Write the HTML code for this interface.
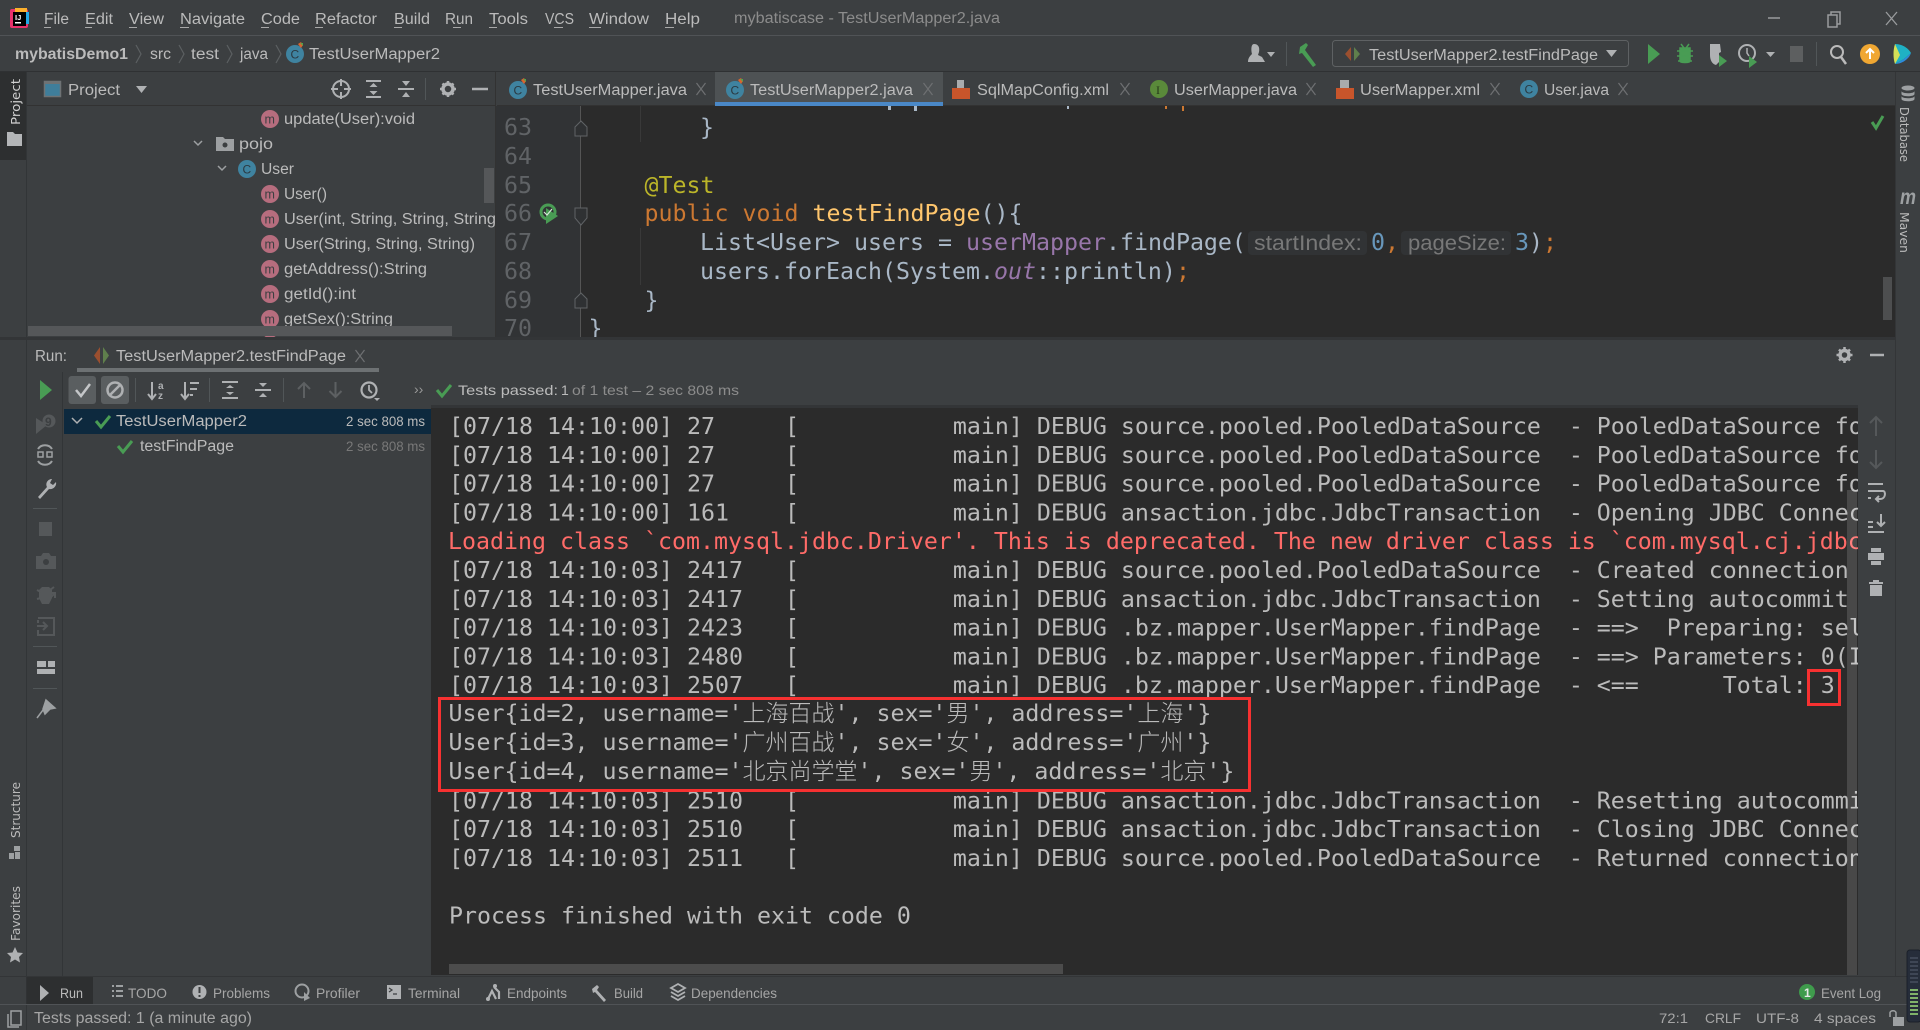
<!DOCTYPE html>
<html><head><meta charset="utf-8"><title>mybatiscase - TestUserMapper2.java</title>
<style>
html,body{margin:0;padding:0;background:#3c3f41;overflow:hidden;width:1920px;height:1030px}
svg{display:block}
text{white-space:pre}
.u{font-family:"Liberation Sans","Noto Sans CJK SC",sans-serif;font-size:15.5px;fill:#bbbbbb}
.s{font-size:14px}
.g{fill:#8c8c8c}
.m{font-family:"DejaVu Sans Mono","Noto Sans CJK SC",monospace;font-size:23.25px;fill:#bbbbbb}
.cj{font-size:23px;font-family:"Noto Sans CJK SC",sans-serif;font-weight:300}
.c{fill:#a9b7c6}
.r{fill:#ff6b68}
.k{fill:#cc7832}
.ln{fill:#606366}
.v{font-family:"DejaVu Sans",sans-serif;font-size:12.5px;fill:#bbbbbb}
.ic{fill:none;stroke:#afb1b3;stroke-width:2}
.x{stroke:#6e7072;stroke-width:1.2;fill:none}
.sep{stroke:#515658;stroke-width:1}
</style></head><body>
<svg xmlns="http://www.w3.org/2000/svg" width="1920" height="1030" viewBox="0 0 1920 1030">
<defs>
<clipPath id="con"><rect x="431" y="408" width="1427" height="567"/></clipPath>
<clipPath id="tree"><rect x="27" y="106" width="468" height="231"/></clipPath>
<clipPath id="ed"><rect x="497" y="106" width="1398" height="231"/></clipPath>
<g id="ci"><circle r="9" fill="#3f83a0"/><text y="4.5" x="-4.5" font-family="Liberation Sans" font-size="12" fill="#2b3a42">C</text></g>
<g id="cp"><use href="#ci"/><path d="M3 -10l3 -2 2 3 -2 3z" fill="#d9652f"/><path d="M5 -11l3 0 0 3z" fill="#58a14b"/></g>
<g id="mi"><circle r="9" fill="#b66d7e"/><text y="4.5" x="-5.5" font-family="Liberation Sans" font-size="12.5" fill="#3c3f41">m</text></g>
<path id="xx" class="x" d="M-4.5 -6L4.5 6M4.5 -6L-4.5 6"/>
<path id="xml" fill="#c8552b" d="M-9 0h18v11h-18z"/>
</defs>

<rect width="1920" height="1030" fill="#3c3f41"/>

<!-- title bar -->
<rect x="0" y="35" width="1920" height="1" fill="#505356"/>
<rect x="10" y="9" width="18" height="19" rx="2" fill="#e8336b"/>
<rect x="15" y="8" width="12" height="6" fill="#fcb02c"/>
<rect x="23" y="12" width="6" height="12" fill="#22a8e6"/>
<rect x="13" y="12" width="13" height="14" fill="#000"/>
<text x="15" y="20" font-family="Liberation Sans" font-size="7.5" font-weight="bold" fill="#fff">IJ</text>
<rect x="15" y="22" width="6" height="1.5" fill="#fff"/>
<g class="u">
<text x="44" y="24" textLength="25" lengthAdjust="spacingAndGlyphs" class="u">File</text>
<text x="85" y="24" textLength="28" lengthAdjust="spacingAndGlyphs" class="u">Edit</text>
<text x="129" y="24" textLength="35" lengthAdjust="spacingAndGlyphs" class="u">View</text>
<text x="180" y="24" textLength="65" lengthAdjust="spacingAndGlyphs" class="u">Navigate</text>
<text x="261" y="24" textLength="39" lengthAdjust="spacingAndGlyphs" class="u">Code</text>
<text x="315" y="24" textLength="62" lengthAdjust="spacingAndGlyphs" class="u">Refactor</text>
<text x="394" y="24" textLength="36" lengthAdjust="spacingAndGlyphs" class="u">Build</text>
<text x="445" y="24" textLength="28" lengthAdjust="spacingAndGlyphs" class="u">Run</text>
<text x="489" y="24" textLength="39" lengthAdjust="spacingAndGlyphs" class="u">Tools</text>
<text x="545" y="24" textLength="29" lengthAdjust="spacingAndGlyphs" class="u">VCS</text>
<text x="589" y="24" textLength="60" lengthAdjust="spacingAndGlyphs" class="u">Window</text>
<text x="665" y="24" textLength="35" lengthAdjust="spacingAndGlyphs" class="u">Help</text>
<text x="734" y="23" textLength="266" lengthAdjust="spacingAndGlyphs" class="u g">mybatiscase - TestUserMapper2.java</text>
</g>
<g fill="#bbbbbb" opacity=".85">
<rect x="44" y="27" width="7" height="1"/><rect x="85" y="27" width="7" height="1"/><rect x="129" y="27" width="8" height="1"/><rect x="180" y="27" width="9" height="1"/><rect x="261" y="27" width="8" height="1"/><rect x="315" y="27" width="8" height="1"/><rect x="394" y="27" width="8" height="1"/><rect x="453" y="27" width="8" height="1"/><rect x="489" y="27" width="8" height="1"/><rect x="554" y="27" width="9" height="1"/><rect x="589" y="27" width="12" height="1"/><rect x="665" y="27" width="9" height="1"/>
</g>
<path d="M1768 18h12" stroke="#9a9c9e" stroke-width="1.5"/>
<path d="M1828 15h9v12h-9zM1831 15v-3h9v12h-3" fill="none" stroke="#9a9c9e" stroke-width="1.5"/>
<path d="M1886 12l11 13M1897 12l-11 13" stroke="#9a9c9e" stroke-width="1.3"/>

<!-- nav bar -->
<rect x="0" y="71" width="1920" height="1" fill="#2f3133"/>
<text x="15" y="59" textLength="113" lengthAdjust="spacingAndGlyphs" class="u" font-weight="bold" style="font-weight:bold">mybatisDemo1</text>
<text x="150" y="59" textLength="21" lengthAdjust="spacingAndGlyphs" class="u">src</text>
<text x="191" y="59" textLength="28" lengthAdjust="spacingAndGlyphs" class="u">test</text>
<text x="240" y="59" textLength="28" lengthAdjust="spacingAndGlyphs" class="u">java</text>
<text x="309" y="59" textLength="131" lengthAdjust="spacingAndGlyphs" class="u">TestUserMapper2</text>
<path d="M136 45l5 9 -5 9M179 45l5 9 -5 9M227 45l5 9 -5 9M276 45l5 9 -5 9" fill="none" stroke="#5c6062" stroke-width="1.2"/>
<use href="#cp" x="295" y="54"/>
<!-- toolbar -->
<path d="M1254 44c4 0 6 3 5 8l-1 3 4 2 3 5h-17c0 -4 2 -6 4 -8 -1 -4 -1 -10 2 -10z" fill="#afb1b3"/>
<path d="M1267 52h8l-4 5z" fill="#afb1b3"/>
<line class="sep" x1="1286.5" y1="42" x2="1286.5" y2="66"/>
<path d="M1300 47l6 -4 2 2 -3 5 11 15 -3 2 -11 -14 -3 1z" fill="#499c54"/>
<rect x="1332.5" y="40.5" width="296" height="26" rx="3" fill="#3c3f41" stroke="#5e6163"/>
<path d="M1351 47v14l-6 -7z" fill="#9b4f2f"/><path d="M1354 47v14l6 -7z" fill="#5f7f4c"/>
<text x="1369" y="60" textLength="229" lengthAdjust="spacingAndGlyphs" class="u">TestUserMapper2.testFindPage</text>
<path d="M1606 50h11l-5.500 7z" fill="#afb1b3"/>
<path d="M1648 44l12 10 -12 10z" fill="#499c54"/>
<path d="M1680 48h10v13c0 2 -10 2 -10 0zM1681 44l3 4M1689 44l-3 4M1677 51h16M1677 56h16M1678 61h14" fill="#499c54" stroke="#499c54" stroke-width="1.500"/>
<path d="M1710 44h10l1 8 -2 1v9l-3 3c-4 -1 -6 -5 -6 -10z" fill="#afb1b3"/><path d="M1719 55l8 6 -8 6z" fill="#499c54"/>
<circle cx="1747" cy="53" r="8" fill="none" stroke="#afb1b3" stroke-width="2"/><path d="M1747 48v5l2 3" stroke="#afb1b3" stroke-width="1.500" fill="none"/><path d="M1749 56l8 6 -8 6z" fill="#499c54"/>
<path d="M1766 52h9l-4.500 5z" fill="#afb1b3"/>
<rect x="1790" y="46" width="13" height="16" fill="#5d5f60"/>
<line class="sep" x1="1816.5" y1="42" x2="1816.5" y2="66"/>
<circle cx="1837" cy="52" r="6" fill="none" stroke="#bbbbbb" stroke-width="2"/><path d="M1841 57l5 7" stroke="#bbbbbb" stroke-width="2.500"/>
<ellipse cx="1870" cy="54" rx="10" ry="10" fill="#f0a732"/><path d="M1870 59v-9M1866 53l4 -4 4 4" stroke="#fff" stroke-width="2" fill="none"/>
<path d="M1895 44c8 0 14 5 16 9l-7 6 -9 5z" fill="#1fb1c4"/><path d="M1895 44c-2 6 -2 14 0 20l5 -9z" fill="#d4e157"/><path d="M1911 53l-7 6 -9 5c7 0 14 -5 16 -11z" fill="#2d8cdb"/>

<!-- left strip -->
<rect x="0" y="72" width="26" height="88" fill="#2d2f30"/>
<rect x="26" y="72" width="1" height="958" fill="#323537"/>
<text class="v" transform="translate(20,125) rotate(-90)" textLength="46" lengthAdjust="spacingAndGlyphs" style="fill:#d0d0d0">Project</text>
<path d="M7 132h6l2 2h7v12h-15z" fill="#b4b6b8"/>
<text class="v" transform="translate(20,838) rotate(-90)" textLength="56" lengthAdjust="spacingAndGlyphs">Structure</text>
<path d="M9 853h5v6h-5zM14 846h6v5h-6zM15 852h5v7h-5z" fill="#9da0a2"/>
<text class="v" transform="translate(20,941) rotate(-90)" textLength="55" lengthAdjust="spacingAndGlyphs">Favorites</text>
<path d="M15 947l2.500 5.500 5.500 .5 -4 4 1 5.500 -5 -3 -5 3 1 -5.500 -4 -4 5.500 -.5z" fill="#afb1b3"/>

<!-- project header -->
<rect x="27" y="105" width="468" height="1" fill="#323232"/>
<rect x="44.500" y="81.500" width="16" height="15" fill="#3f7e9b" stroke="#6e7274" stroke-width="1.500"/>
<rect x="44" y="81" width="17" height="3" fill="#6e7274"/>
<text x="68" y="95" textLength="52" lengthAdjust="spacingAndGlyphs" class="u">Project</text>
<path d="M136 86h11l-5.500 7z" fill="#afb1b3"/>
<circle cx="341" cy="89" r="8" fill="none" stroke="#afb1b3" stroke-width="2"/><path d="M341 79v7M341 92v7M331 89h7M344 89h7" stroke="#afb1b3" stroke-width="2"/>
<path d="M366 81h15M366 97h15" stroke="#afb1b3" stroke-width="2"/><path d="M369.500 87l4 -4 4 4zM369.500 91l4 4 4 -4z" fill="#afb1b3"/>
<path d="M398 89h16" stroke="#afb1b3" stroke-width="2"/><path d="M402 81l4 5 4 -5zM402 97l4 -5 4 5z" fill="#afb1b3"/>
<line class="sep" x1="425.500" y1="78" x2="425.500" y2="100"/>
<circle cx="448" cy="89" r="5" fill="none" stroke="#afb1b3" stroke-width="3.500"/><path d="M448 81v3M448 94v3M440 89h3M453 89h3M442.500 83.500l2 2M451.500 92.500l2 2M442.500 94.500l2 -2M451.500 85.500l2 -2" stroke="#afb1b3" stroke-width="2.500"/>
<path d="M472 89h16" stroke="#afb1b3" stroke-width="2.500"/>

<!-- tree -->
<g clip-path="url(#tree)">
<use href="#mi" x="270" y="119"/>
<text x="284" y="124" textLength="131" lengthAdjust="spacingAndGlyphs" class="u">update(User):void</text>
<path d="M194 141l4 4 4 -4M218 166l4 4 4 -4" fill="none" stroke="#9da0a2" stroke-width="1.500"/>
<path d="M216 137h7l2 2h9v12h-18z" fill="#9da0a2"/><circle cx="225" cy="145" r="2.500" fill="#3c3f41"/>
<text x="239" y="149" textLength="34" lengthAdjust="spacingAndGlyphs" class="u">pojo</text>
<use href="#ci" x="247" y="169"/>
<text x="261" y="174" textLength="33" lengthAdjust="spacingAndGlyphs" class="u">User</text>
<use href="#mi" x="270" y="194"/><text x="284" y="199" textLength="43" lengthAdjust="spacingAndGlyphs" class="u">User()</text>
<use href="#mi" x="270" y="219"/><text x="284" y="224" textLength="212" lengthAdjust="spacingAndGlyphs" class="u">User(int, String, String, String</text>
<use href="#mi" x="270" y="244"/><text x="284" y="249" textLength="191" lengthAdjust="spacingAndGlyphs" class="u">User(String, String, String)</text>
<use href="#mi" x="270" y="269"/><text x="284" y="274" textLength="143" lengthAdjust="spacingAndGlyphs" class="u">getAddress():String</text>
<use href="#mi" x="270" y="294"/><text x="284" y="299" textLength="72" lengthAdjust="spacingAndGlyphs" class="u">getId():int</text>
<use href="#mi" x="270" y="319"/><text x="284" y="324" textLength="109" lengthAdjust="spacingAndGlyphs" class="u">getSex():String</text>
<use href="#mi" x="270" y="344"/>
<rect x="484" y="168" width="10" height="35" fill="#555759"/>
<rect x="28" y="326" width="424" height="10" fill="#555759"/>
</g>

<!-- editor -->
<rect x="495" y="106" width="1400" height="231" fill="#2b2b2b"/>
<rect x="495" y="106" width="85" height="231" fill="#313335"/>
<rect x="580" y="106" width="1" height="231" fill="#555555"/>
<rect x="495" y="72" width="1" height="265" fill="#323232"/>
<!-- tabs -->
<rect x="715" y="72" width="228" height="31" fill="#4e5254"/>
<rect x="715" y="102" width="228" height="4" fill="#4a88c7"/>
<rect x="497" y="105" width="218" height="1" fill="#323232"/><rect x="943" y="105" width="952" height="1" fill="#323232"/>
<use href="#cp" x="518" y="90"/><text x="533" y="95" textLength="154" lengthAdjust="spacingAndGlyphs" class="u">TestUserMapper.java</text><use href="#xx" x="701" y="89"/>
<use href="#cp" x="735" y="90"/><text x="750" y="95" textLength="163" lengthAdjust="spacingAndGlyphs" class="u">TestUserMapper2.java</text><use href="#xx" x="928" y="89"/>
<path d="M957 80h7v8h-7z" fill="#a9abad"/><use href="#xml" x="961" y="88"/><text x="977" y="95" textLength="132" lengthAdjust="spacingAndGlyphs" class="u">SqlMapConfig.xml</text><use href="#xx" x="1125" y="89"/>
<circle cx="1159" cy="89" r="9" fill="#5a8a3a"/><text x="1156" y="94" font-family="Liberation Serif" font-size="12" fill="#26391a">I</text><text x="1174" y="95" textLength="123" lengthAdjust="spacingAndGlyphs" class="u">UserMapper.java</text><use href="#xx" x="1311" y="89"/>
<path d="M1340 80h9v8h-9z" fill="#a9abad"/><use href="#xml" x="1345" y="88"/><text x="1360" y="95" textLength="120" lengthAdjust="spacingAndGlyphs" class="u">UserMapper.xml</text><use href="#xx" x="1495" y="89"/>
<use href="#ci" x="1529" y="89"/><text x="1544" y="95" textLength="65" lengthAdjust="spacingAndGlyphs" class="u">User.java</text><use href="#xx" x="1623" y="89"/>

<g fill="#a9b7c6"><rect x="888" y="106" width="3" height="4"/><rect x="914" y="106" width="3" height="5"/><rect x="1067" y="106" width="2" height="3"/></g>
<g fill="#cc7832"><rect x="1165" y="106" width="2" height="3"/><rect x="1182" y="106" width="2" height="5"/></g>
<g clip-path="url(#ed)">
<g class="m">
<text class="m ln" x="504" y="135">63</text>
<text class="m ln" x="504" y="164">64</text>
<text class="m ln" x="504" y="193">65</text>
<text class="m ln" x="504" y="221">66</text>
<text class="m ln" x="504" y="250">67</text>
<text class="m ln" x="504" y="279">68</text>
<text class="m ln" x="504" y="308">69</text>
<text class="m ln" x="504" y="336">70</text>
<text class="m c" x="700" y="135">}</text>
<text class="m" x="644.500" y="193" style="fill:#bbb529">@Test</text>
<text class="m" x="644.500" y="221"><tspan class="k">public void </tspan><tspan style="fill:#ffc66d">testFindPage</tspan><tspan class="c">(){</tspan></text>
<text class="m c" x="700" y="250">List&lt;User&gt; users = <tspan style="fill:#9876aa">userMapper</tspan>.findPage(</text>
<text class="m" x="1371" y="250" style="fill:#6897bb">0</text><text class="m k" x="1385" y="250">,</text>
<text class="m" x="1515" y="250" style="fill:#6897bb">3</text><text class="m c" x="1529" y="250">)</text><text class="m k" x="1543" y="250">;</text>
<text class="m c" x="700" y="279">users.forEach(System.<tspan style="fill:#9876aa;font-style:italic">out</tspan>::println)<tspan class="k">;</tspan></text>
<text class="m c" x="644.500" y="308">}</text>
<text class="m c" x="588.500" y="336">}</text>
</g>
<rect x="1248" y="231" width="119" height="24" rx="4" fill="#313335"/>
<rect x="1401" y="231" width="110" height="24" rx="4" fill="#313335"/>
<text x="1254" y="250" textLength="108" lengthAdjust="spacingAndGlyphs" class="u" style="font-size:21px;fill:#787878">startIndex:</text>
<text x="1408" y="250" textLength="98" lengthAdjust="spacingAndGlyphs" class="u" style="font-size:21px;fill:#787878">pageSize:</text>
<path d="M640.500 106v36M640.500 228v57" stroke="#393939"/>
<path d="M575 136v-9l6 -6 6 6v9zM575 208h12v10l-6 7 -6 -7zM575 308v-9l6 -6 6 6v9z" fill="#2f3133" stroke="#606366"/>
<circle cx="548" cy="212" r="7" fill="none" stroke="#499c54" stroke-width="3"/><path d="M546 208l12 8 -12 8z" fill="#499c54"/><path d="M544 212l3 3 5 -6" stroke="#d7e8d9" stroke-width="1.200" fill="none"/>
</g>
<path d="M1872 122l4 6 7 -12" fill="none" stroke="#499c54" stroke-width="3"/>
<rect x="1883" y="277" width="9" height="43" fill="#4d4e4f"/>

<!-- right strip -->
<rect x="1895" y="72" width="25" height="958" fill="#3c3f41"/>
<rect x="1895" y="72" width="1" height="905" fill="#333537"/>
<ellipse cx="1908" cy="88" rx="6.500" ry="2.500" fill="#9da0a2"/><path d="M1901.500 91c0 3 13 3 13 0v3c0 3 -13 3 -13 0zM1901.500 96c0 3 13 3 13 0v3c0 3 -13 3 -13 0z" fill="#9da0a2"/>
<text class="v" transform="translate(1900,107) rotate(90)" textLength="55" lengthAdjust="spacingAndGlyphs">Database</text>
<text x="1900" y="204" font-family="Liberation Sans" font-size="21" font-weight="bold" font-style="italic" fill="#9da0a2" textLength="16" lengthAdjust="spacingAndGlyphs">m</text>
<text class="v" transform="translate(1900,212) rotate(90)" textLength="41" lengthAdjust="spacingAndGlyphs">Maven</text>

<!-- run panel -->
<rect x="0" y="337" width="1895" height="3" fill="#333537"/>
<text x="35" y="361" textLength="32" lengthAdjust="spacingAndGlyphs" class="u">Run:</text>
<path d="M100 347v17l-6 -8.500z" fill="#9b4f2f"/><path d="M103 347v17l6 -8.500z" fill="#5f7f4c"/>
<text x="116" y="361" textLength="230" lengthAdjust="spacingAndGlyphs" class="u">TestUserMapper2.testFindPage</text>
<use href="#xx" x="360" y="356"/>
<rect x="77" y="368" width="302" height="4" fill="#6d7173"/>
<circle cx="1844.500" cy="355" r="4.500" fill="none" stroke="#afb1b3" stroke-width="3.500"/><path d="M1844.500 347v3M1844.500 360v3M1836.500 355h3M1849.500 355h3M1839 349.500l2 2M1848 358.500l2 2M1839 360.500l2 -2M1848 351.500l2 -2" stroke="#afb1b3" stroke-width="2.500"/>
<path d="M1870 355h14" stroke="#afb1b3" stroke-width="2.500"/>

<rect x="62" y="372" width="1" height="604" fill="#323537"/>
<path d="M40 380l12 10 -12 10z" fill="#499c54"/>
<rect x="68.500" y="376" width="27.500" height="28" rx="3" fill="#5a5e60"/>
<rect x="101" y="376" width="28" height="28" rx="3" fill="#5a5e60"/>
<path d="M76 390l5 6 9 -12" fill="none" stroke="#c4c6c8" stroke-width="2.500"/>
<circle cx="115" cy="390" r="7.500" fill="none" stroke="#afb1b3" stroke-width="2.500"/><path d="M110 395l10 -10" stroke="#afb1b3" stroke-width="2.500"/>
<line class="sep" x1="135.500" y1="378" x2="135.500" y2="402"/>
<path d="M152 382v16M148 394l4 5 4 -5" fill="none" stroke="#afb1b3" stroke-width="2"/><text x="158" y="389" font-family="Liberation Sans" font-size="10" font-weight="bold" fill="#afb1b3">a</text><text x="158" y="399" font-family="Liberation Sans" font-size="10" font-weight="bold" fill="#afb1b3">z</text>
<path d="M185 382v16M181 394l4 5 4 -5" fill="none" stroke="#afb1b3" stroke-width="2"/><path d="M190 383h9M190 389h7M190 395h3" stroke="#afb1b3" stroke-width="2"/>
<line class="sep" x1="209.500" y1="378" x2="209.500" y2="402"/>
<path d="M222 382h16M222 398h16" stroke="#afb1b3" stroke-width="2"/><path d="M226 388l4 -3 4 3zM226 392l4 3 4 -3z" fill="#afb1b3"/>
<path d="M255 390h16" stroke="#afb1b3" stroke-width="2"/><path d="M259 383l4 4 4 -4zM259 397l4 -4 4 4z" fill="#afb1b3"/>
<line class="sep" x1="283.500" y1="378" x2="283.500" y2="402"/>
<path d="M304 398v-15M298 389l6 -6 6 6M335.500 382v15M329.500 391l6 6 6 -6" fill="none" stroke="#5d6062" stroke-width="2"/>
<circle cx="369" cy="390" r="7.500" fill="none" stroke="#afb1b3" stroke-width="2.200"/><path d="M369 385v5l3 3" fill="none" stroke="#afb1b3" stroke-width="1.800"/><path d="M374 398h6l-3 3z" fill="#afb1b3"/>
<text x="414" y="394" class="u s" style="fill:#999">››</text>
<path d="M437 390l5 6 9 -11" fill="none" stroke="#499c54" stroke-width="3"/>
<text x="458" y="395" textLength="100" lengthAdjust="spacingAndGlyphs" class="u s">Tests passed:</text>
<text x="561" y="395" textLength="8" class="u s">1</text>
<text x="572" y="395" textLength="167" lengthAdjust="spacingAndGlyphs" class="u s g">of 1 test – 2 sec 808 ms</text>

<rect x="64" y="409" width="367" height="25" fill="#0d293e"/>
<path d="M72 418l5 5 5 -5" fill="none" stroke="#afb1b3" stroke-width="1.500"/>
<path d="M96 421l5 6 9 -11" fill="none" stroke="#499c54" stroke-width="3"/>
<text x="116" y="426" textLength="131" lengthAdjust="spacingAndGlyphs" class="u">TestUserMapper2</text>
<text x="346" y="426" textLength="79" lengthAdjust="spacingAndGlyphs" class="u s">2 sec 808 ms</text>
<path d="M118 446l5 6 9 -11" fill="none" stroke="#499c54" stroke-width="3"/>
<text x="140" y="451" textLength="94" lengthAdjust="spacingAndGlyphs" class="u">testFindPage</text>
<text x="346" y="451" textLength="79" lengthAdjust="spacingAndGlyphs" class="u s g" style="fill:#787878">2 sec 808 ms</text>

<!-- run strip icons -->
<path d="M36 418l11 7 -11 9z" fill="#55585a"/><circle cx="49" cy="421" r="6.500" fill="#55585a"/><text x="45" y="426" font-family="Liberation Sans" font-weight="bold" font-size="12" fill="#3c3f41">9</text>
<path d="M38 449c3 -5 11 -5 14 0M52 461c-3 5 -11 5 -14 0" fill="none" stroke="#9da0a2" stroke-width="2"/><path d="M38 452h5v5h-5zM47 452h5v5h-5z" fill="none" stroke="#9da0a2" stroke-width="1.500"/>
<path d="M38 497l9 -10c-2 -4 1 -8 5 -8l-2 4 3 2 3 -3c1 4 -3 8 -7 7l-9 10z" fill="#afb1b3"/>
<line class="sep" x1="33" y1="508.500" x2="57" y2="508.500"/>
<rect x="39" y="522" width="13" height="14" fill="#55585a"/>
<path d="M36 556h5l2 -3h6l2 3h5v13h-20z" fill="#55585a"/><circle cx="46" cy="562" r="3" fill="#3c3f41"/>
<path d="M42 587h7l3 3v8l-3 6h-7l-3 -6v-8z" fill="#55585a"/><path d="M37 590l4 2M37 599l4 -1M54 587l-4 3" stroke="#55585a" stroke-width="2"/><path d="M48 600l7 -7M50 593h5v5" stroke="#55585a" stroke-width="2" fill="none"/>
<path d="M38 618h16v17h-16v-5M38 623v-3M37 626h9M43 622l4 4 -4 4" fill="none" stroke="#55585a" stroke-width="2"/>
<line class="sep" x1="33" y1="646.500" x2="57" y2="646.500"/>
<path d="M37 661h9v6h-9zM48 661h7v6h-7zM37 669h18v5h-18z" fill="#afb1b3"/>
<line class="sep" x1="33" y1="688.500" x2="57" y2="688.500"/>
<path d="M46 700l9 8 -5 1 -5 5 -2 -5zM43 710l-6 8" fill="#9da0a2" stroke="#9da0a2" stroke-width="1.500"/>

<!-- console -->
<rect x="431" y="408" width="1427" height="567" fill="#2b2b2b"/>
<g clip-path="url(#con)">
<text class="m" x="449" y="434">[07/18 14:10:00] 27     [           main] DEBUG source.pooled.PooledDataSource  - PooledDataSource forcefully</text>
<text class="m" x="449" y="462.800">[07/18 14:10:00] 27     [           main] DEBUG source.pooled.PooledDataSource  - PooledDataSource forcefully</text>
<text class="m" x="449" y="491.600">[07/18 14:10:00] 27     [           main] DEBUG source.pooled.PooledDataSource  - PooledDataSource forcefully</text>
<text class="m" x="449" y="520.400">[07/18 14:10:00] 161    [           main] DEBUG ansaction.jdbc.JdbcTransaction  - Opening JDBC Connection</text>
<text class="m r" x="448" y="549.200">Loading class `com.mysql.jdbc.Driver'. This is deprecated. The new driver class is `com.mysql.cj.jdbc.Driver'.</text>
<text class="m" x="449" y="578">[07/18 14:10:03] 2417   [           main] DEBUG source.pooled.PooledDataSource  - Created connection 1234567</text>
<text class="m" x="449" y="606.800">[07/18 14:10:03] 2417   [           main] DEBUG ansaction.jdbc.JdbcTransaction  - Setting autocommit to false</text>
<text class="m" x="449" y="635.600">[07/18 14:10:03] 2423   [           main] DEBUG .bz.mapper.UserMapper.findPage  - ==>  Preparing: select</text>
<text class="m" x="449" y="664.400">[07/18 14:10:03] 2480   [           main] DEBUG .bz.mapper.UserMapper.findPage  - ==> Parameters: 0(Integer)</text>
<text class="m" x="449" y="693.200">[07/18 14:10:03] 2507   [           main] DEBUG .bz.mapper.UserMapper.findPage  - &lt;==      Total: 3</text>
<text class="m" x="448.500" y="721">User{id=2, username='<tspan class="cj">上海百战</tspan>', sex='<tspan class="cj">男</tspan>', address='<tspan class="cj">上海</tspan>'}</text>
<text class="m" x="448.500" y="750">User{id=3, username='<tspan class="cj">广州百战</tspan>', sex='<tspan class="cj">女</tspan>', address='<tspan class="cj">广州</tspan>'}</text>
<text class="m" x="448.500" y="779">User{id=4, username='<tspan class="cj">北京尚学堂</tspan>', sex='<tspan class="cj">男</tspan>', address='<tspan class="cj">北京</tspan>'}</text>
<text class="m" x="449" y="808.400">[07/18 14:10:03] 2510   [           main] DEBUG ansaction.jdbc.JdbcTransaction  - Resetting autocommit to true</text>
<text class="m" x="449" y="837.200">[07/18 14:10:03] 2510   [           main] DEBUG ansaction.jdbc.JdbcTransaction  - Closing JDBC Connection</text>
<text class="m" x="449" y="866">[07/18 14:10:03] 2511   [           main] DEBUG source.pooled.PooledDataSource  - Returned connection 1234567</text>
<text class="m" x="449" y="923.600">Process finished with exit code 0</text>
<rect x="449" y="964" width="614" height="10" fill="#4c4c4c"/>
<rect x="1847" y="490" width="10" height="485" fill="#fff" opacity=".14"/>
</g>
<rect x="431" y="405" width="1427" height="3" fill="#333537"/>
<!-- red boxes -->
<rect x="439.500" y="698.500" width="810" height="92" fill="none" stroke="#f73131" stroke-width="3"/>
<rect x="1808.500" y="670.500" width="31" height="34" fill="none" stroke="#f73131" stroke-width="3"/>

<!-- right action icons -->
<path d="M1876 436v-19M1870 423l6 -6 6 6M1876 450v18M1870 462l6 6 6 -6" fill="none" stroke="#55585a" stroke-width="2"/>
<path d="M1868 484h15M1868 491h15c3 0 3 8 -3 8h-4M1879 496l-3 3 3 3M1868 498h3" fill="none" stroke="#afb1b3" stroke-width="2"/>
<path d="M1881 514v12M1877 522l4 4 4 -4M1868 522h5M1868 527h5M1868 532h16" fill="none" stroke="#afb1b3" stroke-width="2"/>
<path d="M1871 548h10v4h-10zM1868 553h16v7h-16zM1871 561h10v4h-10z" fill="#afb1b3"/>
<path d="M1869 582h14v2h-14zM1873 580h6v2h-6zM1870 585h12v11h-12z" fill="#afb1b3"/>

<!-- bottom tool bar -->
<rect x="0" y="976" width="1895" height="1" fill="#333537"/>
<rect x="1895" y="976" width="25" height="1" fill="#333537"/>
<rect x="26.500" y="977" width="66.500" height="27" fill="#2d2f30"/>
<path d="M40 985v16l9 -8z" fill="#afb1b3"/>
<text x="60" y="998" textLength="23" lengthAdjust="spacingAndGlyphs" class="u s">Run</text>
<path d="M112 986h2M112 991h2M112 996h2M116 986h7M116 991h7M116 996h7" stroke="#9da0a2" stroke-width="2"/>
<text x="128" y="998" textLength="39" lengthAdjust="spacingAndGlyphs" class="u s g" style="fill:#a6a6a6">TODO</text>
<circle cx="199.500" cy="992" r="7" fill="#afb1b3"/><path d="M199.500 987v6M199.500 995v2" stroke="#3c3f41" stroke-width="2"/>
<text x="213" y="998" textLength="57" lengthAdjust="spacingAndGlyphs" class="u s" style="fill:#a6a6a6">Problems</text>
<circle cx="302" cy="991" r="6.500" fill="none" stroke="#9da0a2" stroke-width="2"/><path d="M304 992l6 6 -6 3z" fill="#9da0a2"/>
<text x="316" y="998" textLength="44" lengthAdjust="spacingAndGlyphs" class="u s" style="fill:#a6a6a6">Profiler</text>
<rect x="387" y="985" width="14" height="14" fill="#afb1b3"/><path d="M389 988l3 2 -3 2M393 994h4" stroke="#3c3f41" stroke-width="1.200" fill="none"/>
<text x="408" y="998" textLength="52" lengthAdjust="spacingAndGlyphs" class="u s" style="fill:#a6a6a6">Terminal</text>
<path d="M488 999l4 -8 4 8M494 987l5 5v7" fill="none" stroke="#afb1b3" stroke-width="2.200"/><circle cx="488" cy="999" r="2" fill="#afb1b3"/><circle cx="495" cy="986" r="2" fill="#afb1b3"/>
<text x="507" y="998" textLength="60" lengthAdjust="spacingAndGlyphs" class="u s" style="fill:#a6a6a6">Endpoints</text>
<path d="M592 989l5 -4 2 2 -2 3 9 10 -2 2 -9 -10 -2 1z" fill="#afb1b3"/>
<text x="614" y="998" textLength="29" lengthAdjust="spacingAndGlyphs" class="u s" style="fill:#a6a6a6">Build</text>
<path d="M678 984l7 4 -7 4 -7 -4zM671 992l7 4 7 -4M671 996l7 4 7 -4" fill="none" stroke="#afb1b3" stroke-width="1.800"/>
<text x="691" y="998" textLength="86" lengthAdjust="spacingAndGlyphs" class="u s" style="fill:#a6a6a6">Dependencies</text>
<circle cx="1807" cy="992" r="8" fill="#3f9b4c"/><text x="1804" y="997" font-family="Liberation Sans" font-size="12" font-weight="bold" fill="#e8e8e8">1</text>
<text x="1821" y="998" textLength="60" lengthAdjust="spacingAndGlyphs" class="u s" style="fill:#a6a6a6">Event Log</text>

<!-- status bar -->
<rect x="0" y="1004" width="1920" height="1" fill="#505356"/>
<path d="M11 1011h10v14h-10zM8 1014v13h11" fill="none" stroke="#9da0a2" stroke-width="1.500"/>
<text x="34" y="1023" textLength="218" lengthAdjust="spacingAndGlyphs" class="u" style="fill:#a6a6a6">Tests passed: 1 (a minute ago)</text>
<text x="1659" y="1023" textLength="29" lengthAdjust="spacingAndGlyphs" class="u s" style="fill:#a6a6a6">72:1</text>
<text x="1705" y="1023" textLength="36" lengthAdjust="spacingAndGlyphs" class="u s" style="fill:#a6a6a6">CRLF</text>
<text x="1756" y="1023" textLength="43" lengthAdjust="spacingAndGlyphs" class="u s" style="fill:#a6a6a6">UTF-8</text>
<text x="1814" y="1023" textLength="62" lengthAdjust="spacingAndGlyphs" class="u s" style="fill:#a6a6a6">4 spaces</text>
<rect x="1893" y="1017" width="11" height="9" fill="#9da0a2"/><path d="M1890 1017v-4c0 -3 6 -3 6 0v4" fill="none" stroke="#9da0a2" stroke-width="1.500"/>
<!-- widget -->
<rect x="1907" y="950" width="14" height="72" rx="3" fill="#262d3a" stroke="#1b2029"/>
<path d="M1910 990h8M1910 994h8M1910 998h8M1910 1002h8M1910 1006h8M1910 1010h8M1910 1014h8" stroke="#7fb36a" stroke-width="2"/>
<path d="M1910 958h8M1910 962h8M1910 966h8M1910 970h8M1910 974h8M1910 978h8M1910 982h8" stroke="#3e4655" stroke-width="2"/>
</svg>
</body></html>
